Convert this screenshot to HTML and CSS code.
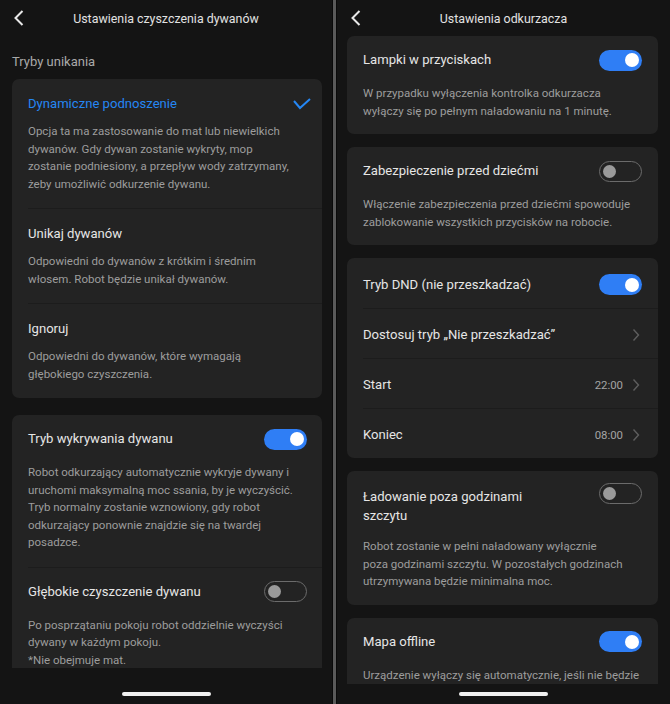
FILE: index.html
```html
<!DOCTYPE html>
<html lang="pl">
  <head>
    <meta charset="UTF-8" />
    <meta name="viewport" content="width=device-width, initial-scale=1.0" />
    <title>Ustawienia odkurzacza</title>
    <link rel="stylesheet" href="styles.css">
  </head>
  <body>
    <div class="device">
      <!-- Carpet cleaning settings -->
      <section class="phone phone--left">
        <header class="topbar">
          <svg class="back" viewBox="0 0 10 16"><polyline points="8.5,1 1.5,8 8.5,15" /></svg>
          <h1>Ustawienia czyszczenia dywanów</h1>
          <span></span>
        </header>
        <div class="screen">
          <p class="section-label">Tryby unikania</p>
          <div class="card">
            <div class="option">
              <div class="option-head">
                <span class="title active">Dynamiczne podnoszenie</span>
                <svg class="check" viewBox="0 0 18 12"><polyline points="1,3 7,10 17,1" /></svg>
              </div>
              <p class="desc">Opcja ta ma zastosowanie do mat lub niewielkich<br>dywanów. Gdy dywan zostanie wykryty, mop<br>zostanie podniesiony, a przepływ wody zatrzymany,<br>żeby umożliwić odkurzenie dywanu.</p>
            </div>
            <div class="option">
              <div class="option-head">
                <span class="title">Unikaj dywanów</span>
              </div>
              <p class="desc">Odpowiedni do dywanów z krótkim i średnim<br>włosem. Robot będzie unikał dywanów.</p>
            </div>
            <div class="option">
              <div class="option-head">
                <span class="title">Ignoruj</span>
              </div>
              <p class="desc">Odpowiedni do dywanów, które wymagają<br>głębokiego czyszczenia.</p>
            </div>
          </div>

          <div class="card">
            <div class="setting">
              <div class="setting-head">
                <span class="title">Tryb wykrywania dywanu</span>
                <span class="toggle on"><span class="knob"></span></span>
              </div>
              <p class="desc">Robot odkurzający automatycznie wykryje dywany i<br>uruchomi maksymalną moc ssania, by je wyczyścić.<br>Tryb normalny zostanie wznowiony, gdy robot<br>odkurzający ponownie znajdzie się na twardej<br>posadzce.</p>
            </div>
            <div class="setting">
              <div class="setting-head">
                <span class="title">Głębokie czyszczenie dywanu</span>
                <span class="toggle off"><span class="knob"></span></span>
              </div>
              <p class="desc">Po posprzątaniu pokoju robot oddzielnie wyczyści<br>dywany w każdym pokoju.<br>*Nie obejmuje mat.</p>
            </div>
          </div>
        </div>
        <div class="navbar"><span class="home-pill"></span></div>
      </section>

      <div class="divider"></div>

      <!-- Vacuum settings -->
      <section class="phone phone--right">
        <header class="topbar">
          <svg class="back" viewBox="0 0 10 16"><polyline points="8.5,1 1.5,8 8.5,15" /></svg>
          <h1>Ustawienia odkurzacza</h1>
          <span></span>
        </header>
        <div class="screen">
          <div class="card">
            <div class="setting">
              <div class="setting-head">
                <span class="title">Lampki w przyciskach</span>
                <span class="toggle on"><span class="knob"></span></span>
              </div>
              <p class="desc">W przypadku wyłączenia kontrolka odkurzacza<br>wyłączy się po pełnym naładowaniu na 1 minutę.</p>
            </div>
          </div>

          <div class="card">
            <div class="setting">
              <div class="setting-head">
                <span class="title">Zabezpieczenie przed dziećmi</span>
                <span class="toggle off"><span class="knob"></span></span>
              </div>
              <p class="desc">Włączenie zabezpieczenia przed dziećmi spowoduje<br>zablokowanie wszystkich przycisków na robocie.</p>
            </div>
          </div>

          <div class="card">
            <div class="row">
              <span class="title">Tryb DND (nie przeszkadzać)</span>
              <span class="toggle on"><span class="knob"></span></span>
            </div>
            <div class="row">
              <span class="title">Dostosuj tryb „Nie przeszkadzać”</span>
              <svg class="chevron" viewBox="0 0 8 14"><polyline points="1.5,1.5 6.5,7 1.5,12.5" /></svg>
            </div>
            <div class="row">
              <span class="title">Start</span>
              <span class="row-end">
                <span class="value">22:00</span>
                <svg class="chevron" viewBox="0 0 8 14"><polyline points="1.5,1.5 6.5,7 1.5,12.5" /></svg>
              </span>
            </div>
            <div class="row">
              <span class="title">Koniec</span>
              <span class="row-end">
                <span class="value">08:00</span>
                <svg class="chevron" viewBox="0 0 8 14"><polyline points="1.5,1.5 6.5,7 1.5,12.5" /></svg>
              </span>
            </div>
          </div>

          <div class="card">
            <div class="setting">
              <div class="setting-head setting-head--top">
                <span class="title title--wrap">Ładowanie poza godzinami szczytu</span>
                <span class="toggle off"><span class="knob"></span></span>
              </div>
              <p class="desc">Robot zostanie w pełni naładowany wyłącznie<br>poza godzinami szczytu. W pozostałych godzinach<br>utrzymywana będzie minimalna moc.</p>
            </div>
          </div>

          <div class="card">
            <div class="setting">
              <div class="setting-head">
                <span class="title">Mapa offline</span>
                <span class="toggle on"><span class="knob"></span></span>
              </div>
              <p class="desc">Urządzenie wyłączy się automatycznie, jeśli nie będzie</p>
            </div>
          </div>
        </div>
        <div class="navbar navbar--short"><span class="home-pill"></span></div>
      </section>
    </div>
  </body>
</html>
```

FILE: styles.css
```css
/* Dark settings screens, two phones side by side */
body {
  margin: 0;
  background-color: #0b0b0b;
  font-family: Roboto, "Noto Sans", sans-serif;
  color: #e6e6e6;
}
.device {
  display: flex;
  width: 670px;
  height: 704px;
}
.phone {
  display: flex;
  flex-direction: column;
  height: 704px;
  overflow: hidden;
  background-color: #141414;
}
.phone--left {
  width: 332px;
}
.phone--right {
  width: 333px;
}
.divider {
  width: 3px;
  background-color: #5a5a5a;
  border-left: 1px solid #0a0a0a;
  border-right: 1px solid #0a0a0a;
}

/* top bar */
.topbar {
  flex-shrink: 0;
  height: 36px;
  display: grid;
  grid-template-columns: 40px 1fr 40px;
  align-items: center;
}
.back {
  width: 10px;
  height: 16px;
  margin-left: 14px;
  fill: none;
  stroke: #e8e8e8;
  stroke-width: 2;
}
.topbar h1 {
  margin: 0;
  font-size: 12.4px;
  font-weight: 400;
  text-align: center;
  color: #e2e2e2;
}

.screen {
  flex: 1;
  min-height: 0;
  overflow: hidden;
}
.phone--left .screen {
  padding: 0 10px 0 12px;
}
.phone--right .screen {
  padding: 0 12px 0 10px;
}
.section-label {
  margin: 16px 0 7px;
  font-size: 13px;
  line-height: 20px;
  color: #a9a9a9;
}

/* cards */
.card {
  background-color: #232323;
  border-radius: 7px;
  margin-bottom: 17px;
}
.phone--right .card {
  margin-bottom: 13px;
}
.title {
  font-size: 13.1px;
  line-height: 20px;
  color: #e6e6e6;
}
.title.active {
  color: #2587f4;
}
.desc {
  margin: 9px 0 0;
  font-size: 11.5px;
  line-height: 17.5px;
  color: #9d9d9d;
  white-space: nowrap;
}

.option {
  margin-left: 16px;
  padding: 15px 15px 15px 0;
}
.option + .option,
.setting + .setting,
.row + .row {
  border-top: 1px solid #1c1c1c;
}
.option-head {
  display: flex;
  align-items: center;
  justify-content: space-between;
  height: 20px;
}
.check {
  width: 18px;
  height: 12px;
  margin-right: -4px;
  fill: none;
  stroke: #2587f4;
  stroke-width: 2;
}

.setting {
  margin-left: 16px;
  padding: 12px 15px 15px 0;
}
.phone--right .setting {
  padding: 12px 16px 14px 0;
}
.setting-head {
  display: flex;
  align-items: center;
  justify-content: space-between;
  min-height: 24px;
}
.setting-head--top {
  align-items: flex-start;
}
.setting .desc {
  margin-top: 13px;
}
.title--wrap {
  max-width: 170px;
  margin-top: 4px;
  line-height: 19px;
}

/* list rows with chevrons */
.row {
  box-sizing: border-box;
  height: 50px;
  margin-left: 16px;
  padding: 3px 16px 0 0;
  display: flex;
  align-items: center;
  justify-content: space-between;
}
.row-end {
  display: flex;
  align-items: center;
  gap: 9px;
}
.value {
  font-size: 11.4px;
  color: #a3a3a3;
}
.chevron {
  width: 8px;
  height: 14px;
  margin-right: 2px;
  fill: none;
  stroke: #5e5e5e;
  stroke-width: 1.4;
}

/* switches */
.toggle {
  box-sizing: border-box;
  flex-shrink: 0;
  width: 43px;
  height: 21px;
  border-radius: 11px;
  display: flex;
  align-items: center;
  padding: 0 3px;
}
.toggle.on {
  background-color: #2f7ef5;
  justify-content: flex-end;
}
.toggle.on .knob {
  width: 14px;
  height: 14px;
  border-radius: 50%;
  background-color: #fff;
}
.toggle.off {
  border: 1.5px solid #6b6b6b;
  padding: 0 3px;
}
.toggle.off .knob {
  width: 13px;
  height: 13px;
  border-radius: 50%;
  background-color: #9a9a9a;
}

/* gesture bar */
.navbar {
  flex-shrink: 0;
  box-sizing: border-box;
  height: 36px;
  padding-bottom: 8px;
  display: flex;
  justify-content: center;
  align-items: flex-end;
  background-color: #141414;
}
.navbar--short {
  height: 20px;
}
.home-pill {
  width: 89px;
  height: 4px;
  border-radius: 2px;
  background-color: #f0f0f0;
}
```
